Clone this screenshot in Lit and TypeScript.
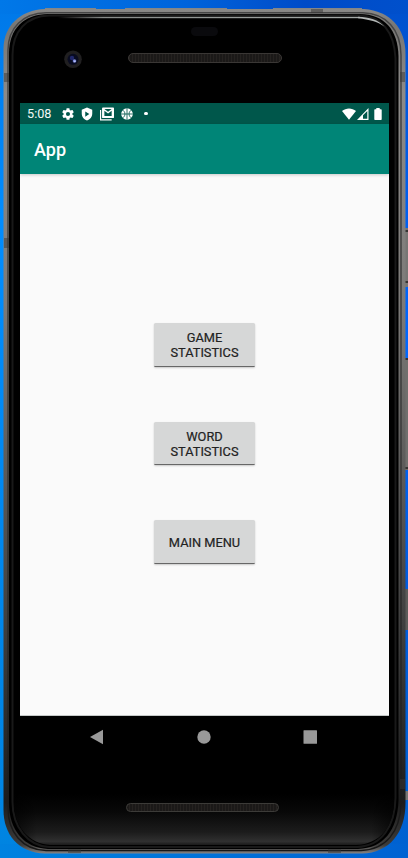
import { LitElement, html, css } from "lit";
import { customElement } from "lit/decorators.js";

@customElement("phone-body")
class PhoneBody extends LitElement {
  static styles = css`
    :host { display: block; }
    svg { display: block; width: 408px; height: 858px; }
  `;
  render() {
    return html`
      <svg viewBox="0 0 408 858">
        <defs>
          <linearGradient id="rim" x1="0" y1="0" x2="0" y2="1">
            <stop offset="0" stop-color="#8b8a88" />
            <stop offset=".02" stop-color="#777674" />
            <stop offset=".1" stop-color="#8c8a88" />
            <stop offset=".35" stop-color="#7c7a78" />
            <stop offset=".55" stop-color="#5b5a59" />
            <stop offset=".75" stop-color="#3c3c3c" />
            <stop offset=".94" stop-color="#1c1c1c" />
            <stop offset=".99" stop-color="#3c3b3a" />
            <stop offset="1" stop-color="#858280" />
          </linearGradient>
          <linearGradient id="groove" x1="0" y1="0" x2="0" y2="1">
            <stop offset="0" stop-color="#454545" />
            <stop offset=".5" stop-color="#3a3a3a" />
            <stop offset="1" stop-color="#171717" />
          </linearGradient>
          <linearGradient id="chin" x1="0" y1="0" x2="0" y2="1">
            <stop offset="0" stop-color="#000" />
            <stop offset=".35" stop-color="#080808" />
            <stop offset=".75" stop-color="#1c1c1c" />
            <stop offset=".93" stop-color="#303030" />
            <stop offset="1" stop-color="#1a1a1a" />
          </linearGradient>
          <linearGradient id="sides">
            <stop offset="0" stop-color="#000" stop-opacity=".6" />
            <stop offset=".06" stop-color="#000" stop-opacity="0" />
            <stop offset=".94" stop-color="#000" stop-opacity="0" />
            <stop offset="1" stop-color="#000" stop-opacity=".6" />
          </linearGradient>
          <linearGradient id="shine" x1="0" y1="0" x2="1" y2="0">
            <stop offset="0" stop-color="#999" stop-opacity="0" />
            <stop offset=".15" stop-color="#888c8a" />
            <stop offset="1" stop-color="#a5aaa8" />
          </linearGradient>
          <pattern id="mesh" width="3" height="9" patternUnits="userSpaceOnUse">
            <rect width="3" height="9" fill="#1b1918" /><rect width="1" height="9" fill="#252220" />
          </pattern>
        </defs>

        <g fill="#777674">
          <rect x="404" y="228" width="6" height="59" /><rect x="404" y="358" width="6" height="112" fill="#706f6d" />
          <rect x="405" y="589" width="3" height="41" fill="#5c5b59" /><rect x="405" y="791" width="3" height="9" />
        </g>
        <g fill="#353433">
          <rect x="405" y="230" width="3" height="2" /><rect x="405" y="281" width="3" height="2" />
          <rect x="405" y="358" width="3" height="2" /><rect x="405" y="467" width="3" height="2" />
        </g>
        <path d="M45 8h51v3H45zM125 8h102v3H125zM273 8h89v3h-89z" fill="#858687" />

        <path d="M45 9H364C390 11 405.500 28 405.500 54V803C405.500 833 389 853 362 853.500H45C18 853 3.500 834 3.500 810V48C4 26 20 10 45 9Z" fill="url(#rim)" />
        <path d="M46 12.700H363C386 13.500 400.700 29 401 55V804C400 832 386 849.500 361 850.500H46C22 850 8 832 8 808V50C8 28 23 13 46 12.700Z" fill="none" stroke="url(#groove)" stroke-width="1.500" />
        <path d="M48 14H360C384 14 398 30 398.500 56V800C397.500 830 384 848 358 849H48C24 848 9 830 9 803V53C9 29 24 14 48 14Z" fill="#000" />
        <path d="M49 15.500H359C382 16 394 32 395.500 58V798C395 826 382 846 357 847H49C28 846 12.500 827 12.500 802V55C12.500 31 27 16 49 15.500Z" fill="none" stroke="#191919" stroke-width="2" />
        <path d="M14 794H394V799C394 827 380 844 356 845H50C29 844 14 826 14 802Z" fill="url(#chin)" />
        <path d="M14 794H394V799C394 827 380 844 356 845H50C29 844 14 826 14 802Z" fill="url(#sides)" />
        <rect x="58" y="16.800" width="302" height="1.400" fill="url(#shine)" />
        <path d="M358 16.800C370 17 378 20 384.500 26.500C377 21.500 370 19.500 358 18.200Z" fill="#b4b8b7" />

        <g fill="#383736" opacity=".5">
          <rect x="4" y="73" width="5" height="9" /><rect x="4" y="238" width="5" height="10" />
          <rect x="311" y="9" width="12" height="4" /><rect x="400" y="72" width="5" height="10" />
          <rect x="68" y="849" width="13" height="4" /><rect x="328" y="849" width="13" height="4" />
          <rect x="400" y="779" width="5" height="10" />
        </g>

        <rect x="191" y="27" width="27" height="9" rx="4.500" fill="#0a0a0d" />
        <rect x="128.500" y="53.500" width="153" height="9" rx="4.500" fill="url(#mesh)" stroke="#3a3735" />
        <rect x="126.500" y="803.500" width="152" height="8" rx="4" fill="url(#mesh)" stroke="#3c3b38" />
        <circle cx="73" cy="59.300" r="8.800" fill="#201f20" />
        <circle cx="73" cy="59.300" r="5.500" fill="#080b20" />
        <circle cx="72" cy="58" r="2.200" fill="#20276a" />
        <circle cx="74.500" cy="61" r="1.800" fill="#7b88d8" />
        <circle cx="74.800" cy="61.300" r=".8" fill="#c8d1ff" />
      </svg>
    `;
  }
}

@customElement("status-bar")
class StatusBar extends LitElement {
  static styles = css`
    :host {
      display: flex; align-items: center; height: 21px; box-sizing: border-box;
      padding: 0 7px; background: #00574b; color: #f2f7f6;
      font: 400 12.700px/21px Roboto, sans-serif;
    }
    .time { width: 33.500px; }
    .tray { display: flex; align-items: center; gap: 6px; flex: 1; }
    .signals { display: flex; align-items: center; gap: 1px; }
    svg { display: block; fill: #fff; }
    .tray svg { margin-right: -.300px; }
    .dot { width: 3.400px; height: 3.400px; border-radius: 50%; background: #fff; margin-left: 5px; }
    .battery { margin-left: 4px; }
  `;
  render() {
    return html`
      <span class="time">5:08</span>
      <div class="tray">
        <svg width="14" height="14" viewBox="0 0 24 24"><path d="M19.430 12.980c.04-.32.070-.64.070-.98s-.03-.66-.07-.98l2.110-1.650c.19-.15.240-.42.120-.64l-2-3.460c-.12-.22-.39-.3-.61-.22l-2.490 1c-.52-.4-1.080-.73-1.690-.98l-.38-2.650C14.460 2.180 14.250 2 14 2h-4c-.25 0-.46.180-.49.420l-.38 2.650c-.61.250-1.170.590-1.690.980l-2.490-1c-.23-.09-.49 0-.61.220l-2 3.460c-.13.220-.07.490.120.640l2.110 1.650c-.04.320-.07.650-.07.980s.03.660.070.980l-2.110 1.650c-.19.150-.24.420-.12.640l2 3.460c.12.220.390.300.610.220l2.490-1c.52.400 1.080.730 1.690.980l.38 2.650c.03.240.240.420.490.420h4c.25 0 .46-.18.490-.42l.38-2.650c.61-.25 1.170-.59 1.690-.98l2.490 1c.23.090.490 0 .61-.22l2-3.460c.12-.22.070-.49-.12-.64zM12 15.500A3.500 3.500 0 1 1 12 8.500a3.500 3.500 0 0 1 0 7z" /></svg>
        <svg width="14" height="14" viewBox="0 0 24 24"><path fill-rule="evenodd" d="M12 1 3 4.500V11c0 6 4 10.500 9 12 5-1.500 9-6 9-12V4.500ZM9 7.500l7 4.500-7 4.500Z" /></svg>
        <svg width="14" height="14" viewBox="0 0 24 24"><path fill-rule="evenodd" d="M0 5h2v16h18v2H0ZM5 1h17.500A1.500 1.500 0 0 1 24 2.500v15a1.500 1.500 0 0 1-1.500 1.500H5a1.500 1.500 0 0 1-1.500-1.500v-15A1.500 1.500 0 0 1 5 1Zm2.500 14.500h12.500V6.500l-6.200 4.500-6.300-4.500Zm0-12L13.800 8 20 3.500Z" /></svg>
        <svg width="14" height="14" viewBox="0 0 24 24"><circle cx="12" cy="12" r="10" /><path d="M12 2v20M2 12h20M4 5c6 3 6 11 0 14M20 5c-6 3-6 11 0 14" fill="none" stroke="#00574b" stroke-width="1.400" /></svg>
        <i class="dot"></i>
      </div>
      <div class="signals">
        <svg width="14" height="12" viewBox="0 0 14 12"><path d="M0 3C4-.4 10-.4 14 3L7 11.700Z" /></svg>
        <svg width="12" height="12" viewBox="0 0 12 12"><path fill-rule="evenodd" d="M11.500 0v12H0ZM10.300 3 6 7.300v3.400h4.300Z" /></svg>
        <svg class="battery" width="8" height="12" viewBox="0 0 8 12"><path d="M2.300 0h3.400v1.300H7q.7 0 .7.700v9.300q0 .7-.7.700H1q-.7 0-.7-.7V2q0-.7.7-.7h1.300Z" /></svg>
      </div>
    `;
  }
}

@customElement("app-root")
class AppRoot extends LitElement {
  static styles = css`
    :host {
      display: block; position: relative; width: 408px; height: 858px; overflow: hidden;
      background:
        linear-gradient(90deg, #0078e8, #0064dc 45%, #004bc8 75%, #0050cc) 0 0 / 408px 14px no-repeat,
        linear-gradient(90deg, #0082e0, #0072da 50%, #0062d2) 0 844px / 408px 14px no-repeat,
        linear-gradient(#0078e8, #008cff 25%, #0084e0) 0 0 / 60px 858px no-repeat,
        linear-gradient(#0050cc, #0060f0 25%, #0068ff 40%, #005ce0 68%, #0062d0);
      font-family: Roboto, sans-serif;
    }
    .body { position: absolute; inset: 0; }
    .screen {
      position: relative; display: flex; flex-direction: column;
      width: 369px; margin: 0 0 0 20px; padding-top: 103px;
    }
    .bar {
      height: 50px; padding: 1px 14px 0; background: #008577; color: #fff;
      font-size: 18px; font-weight: 500; line-height: 50px; box-sizing: border-box;
      box-shadow: 0 1px 3px #0003; z-index: 1;
    }
    .content {
      height: 542px; box-sizing: border-box; background: #fafafa; border-bottom: 1px solid #c5c9c8;
      display: flex; flex-direction: column; align-items: center; gap: 55px; padding-top: 149px;
    }
    .action {
      width: 101px; height: 43.700px; box-sizing: border-box; border: 0; border-radius: 1.500px;
      border-bottom: 1.500px solid #676767; background: #d6d7d7; color: #222;
      box-shadow: 0 1px 2px #0003; padding: 2px 10px 0; flex: none;
      font: 400 12.800px/15px Roboto, sans-serif; text-transform: uppercase;
      -webkit-text-stroke: .2px #222;
    }
    .nav {
      height: 42px; background: #000; display: flex; justify-content: space-between;
      padding: 0 71px 0 69px; align-items: center;
    }
    .nav svg { display: block; fill: #999; }
  `;
  render() {
    return html`
      <phone-body class="body"></phone-body>
      <main class="screen">
        <status-bar></status-bar>
        <header class="bar">App</header>
        <section class="content">
          ${["Game Statistics", "Word Statistics", "Main Menu"].map(
            (label) => html`<button class="action">${label}</button>`
          )}
        </section>
        <nav class="nav">
          <svg width="16" height="16" viewBox="0 0 16 16"><path d="M14 .7v14.600L1 8Z" /></svg>
          <svg width="16" height="16" viewBox="0 0 16 16"><circle cx="8" cy="8" r="6.700" /></svg>
          <svg width="16" height="16" viewBox="0 0 16 16"><rect x="1.500" y="1.200" width="13.500" height="13.500" rx=".5" /></svg>
        </nav>
      </main>
    `;
  }
}
